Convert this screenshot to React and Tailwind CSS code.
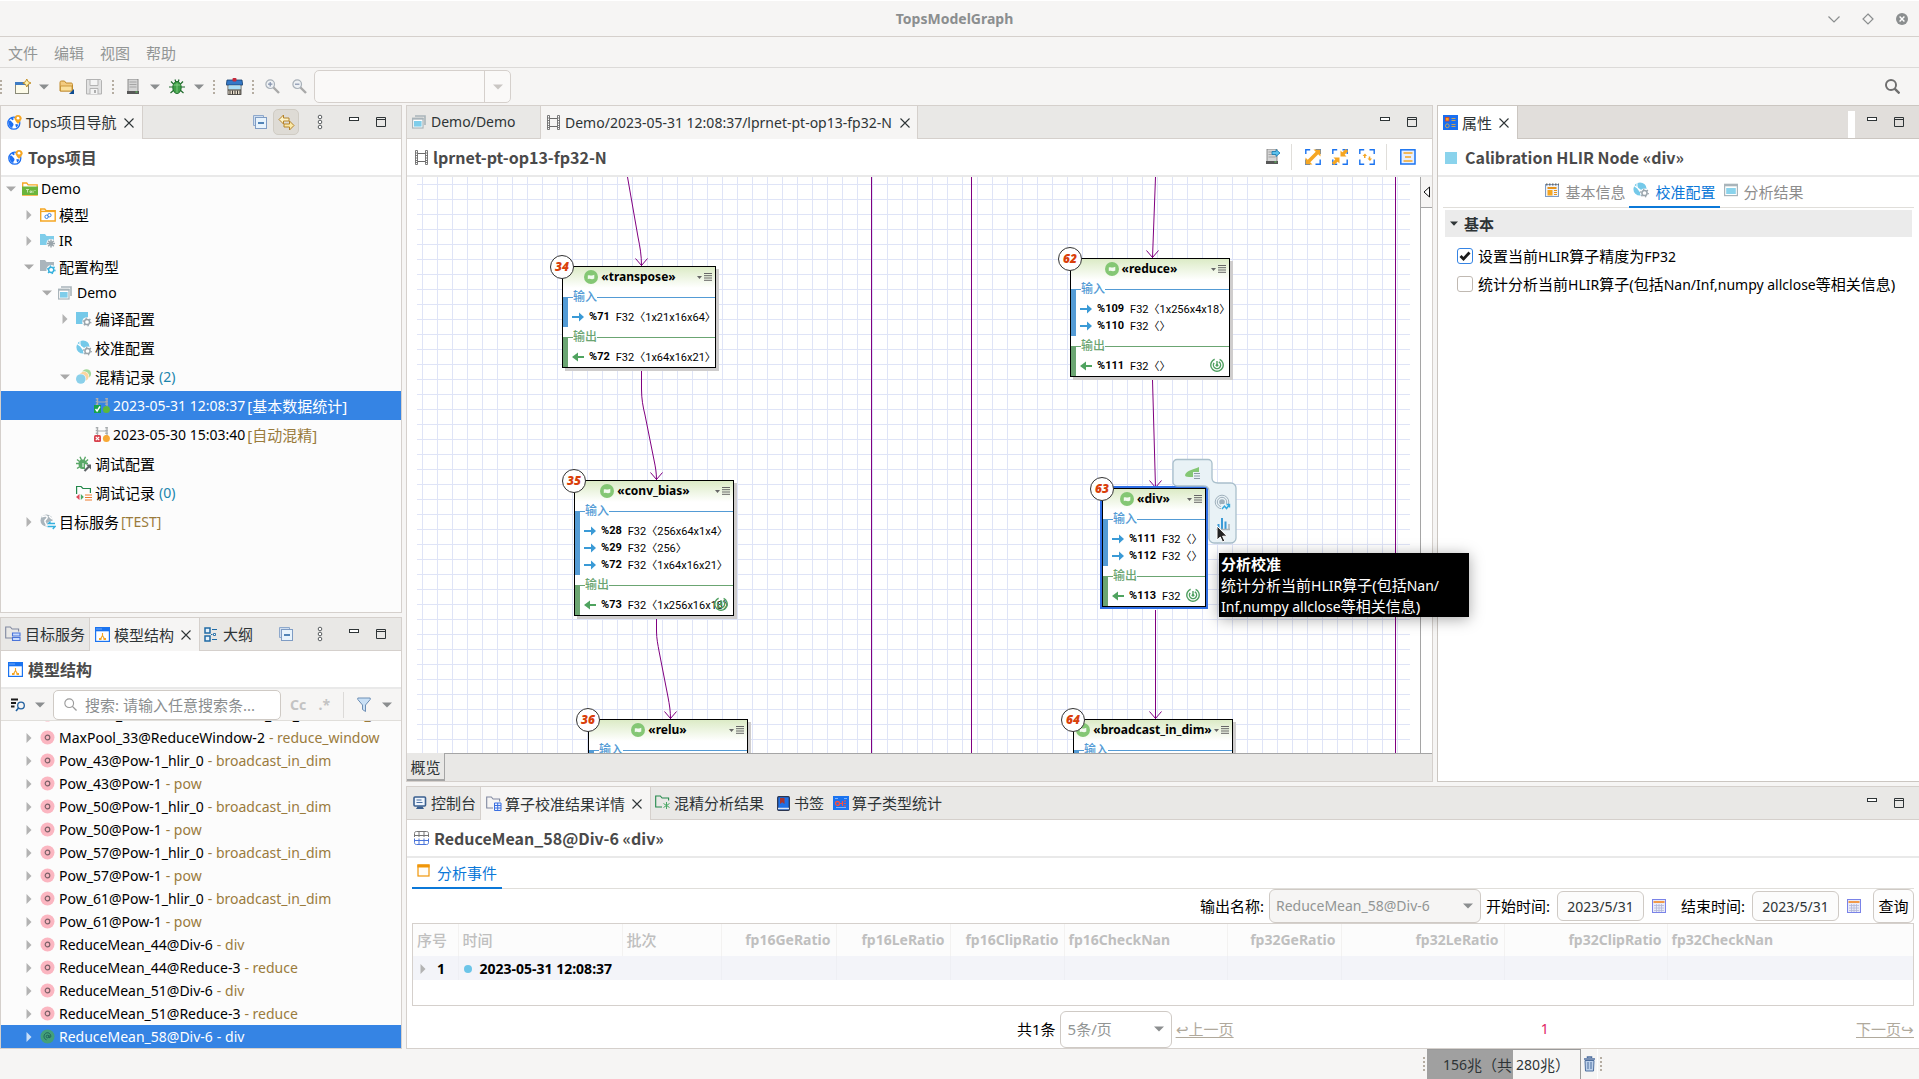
import React from "react";

/* ---------- icons ---------- */

const Svg = ({ s = 16, w, h, vb, children, className = "" }) => (
  <svg width={w || s} height={h || s} viewBox={vb || `0 0 ${w || s} ${h || s}`} className={`block shrink-0 ${className}`} fill="none" aria-hidden="true">
    {children}
  </svg>
);

const Caret = ({ c = "#8b8e8f" }) => (
  <Svg w={10} h={6}><path d="M0 0.5h10L5 5.5z" fill={c} /></Svg>
);
const Grip = () => (
  <Svg w={3} h={16}>
    {[1, 5, 9, 13].map((y) => <rect key={y} x="0" y={y} width="2" height="2" fill="#b5ada2" />)}
  </Svg>
);
const CloseX = () => (
  <Svg w={10} h={10}><path d="M.5.5l9 9M9.5.5l-9 9" stroke="#2e3436" strokeWidth="1.1" /></Svg>
);
const MinIcon = () => (
  <Svg w={10} h={4}><rect x=".5" y=".5" width="9" height="3" stroke="#2e3436" fill="#fff" /></Svg>
);
const MaxIcon = () => (
  <Svg w={10} h={10}><path d="M.5.5h9v9h-9zM.5 2.5h9" stroke="#2e3436" /></Svg>
);
const Dots3 = () => (
  <Svg w={6} h={16}>
    {[3, 8, 13].map((y) => <circle key={y} cx="3" cy={y} r="1.8" stroke="#4a4e50" fill="#fff" strokeWidth=".9" />)}
  </Svg>
);
const CollapseAll = () => (
  <Svg w={14} h={14}>
    <path d="M.5.5h10v2h-8v8h-2z" fill="#cfdef0" stroke="#8fa9cc" />
    <rect x="2.500" y="2.500" width="11" height="11" fill="#e8f3fc" stroke="#7f9cc4" />
    <path d="M5 8h6" stroke="#12539a" strokeWidth="1.400" />
  </Svg>
);
const LinkEditor = () => (
  <Svg w={17} h={17}>
    <path d="M1 5.500L5.500 1v3H11v3H5.500v3z" fill="#fdf3c8" stroke="#b5832a" />
    <path d="M16 11.500L11.500 7v3H6v3h5.500v3z" fill="#fbe9a6" stroke="#b5832a" />
  </Svg>
);
const GlobePin = () => (
  <Svg s={15}>
    <circle cx="6.800" cy="8.200" r="6" stroke="#1d6ff2" strokeWidth="1.300" fill="#fff" />
    <path d="M1.500 6C3 5 4 5.500 4.500 6.500s2 1.500 2 3-1.200 1.500-1.200 3.500C3 12.500 1 9.500 1.500 6zM4 3c1.500-.5 3 0 2.500 1.500S4 5 4 3zM8.500 9l3 .5-1.700 3c-1-.5-1.500-2-1.300-3.500z" fill="#1d6ff2" />
    <path d="M11 0c2.200 0 3.600 1.500 3.600 3.300C14.600 5.500 11 9 11 9S7.500 5.500 7.500 3.300C7.500 1.500 8.800 0 11 0z" fill="#f5a623" />
    <circle cx="11" cy="3.200" r="1.400" fill="#fff" />
  </Svg>
);
const Windows = () => (
  <Svg s={14}>
    <path d="M3 1h10v9" stroke="#a9b4ba" strokeWidth="1.600" />
    <rect x=".6" y="3.600" width="10.400" height="9.400" fill="#fff" stroke="#a9b4ba" strokeWidth="1.200" />
    <path d="M0 3.600h11.500" stroke="#a9b4ba" strokeWidth="2" />
    <rect x="2" y="6" width="7.600" height="5.600" fill="#7fcdea" />
  </Svg>
);
const Film = ({ c = "#6b6b6b" }) => (
  <Svg w={13} h={15}>
    <path d="M.5.500h2v14h-2zM10.500.500h2v14h-2z" fill="#fff" stroke={c} strokeWidth=".9" />
    <path d="M.5 3h2M.5 5.500h2M.5 8h2M.5 10.500h2M.5 12.500h2M10.500 3h2M10.500 5.500h2M10.500 8h2M10.500 10.500h2M10.500 12.500h2" stroke={c} strokeWidth=".9" />
    <path d="M3 3.500h7M3 11.500h7" stroke={c} />
  </Svg>
);
const FolderTops = () => (
  <Svg w={16} h={14}>
    <path d="M.7 13V1h4l1.500 1.800h9V13z" fill="#fff" stroke="#f5a623" strokeWidth="1.300" />
    <rect x="0" y="4.500" width="16" height="8.500" fill="#6bb53c" />
    <path d="M4 7.500h3M5.500 7.500v3M8 9h1.500v1.500H8zM11 8.500v2.500M12.500 8.500h1" stroke="#d9efc9" strokeWidth=".8" />
  </Svg>
);
const FolderLink = () => (
  <Svg w={16} h={14}>
    <path d="M.7 13V1h4l1.500 1.800h9V13z" fill="#fff" stroke="#f5a623" strokeWidth="1.400" />
    <path d="M.7 3.400h14.500" stroke="#f5a623" strokeWidth="1.400" />
    <circle cx="6.600" cy="8.800" r="1.700" stroke="#3b7fe0" /><circle cx="9.400" cy="7.200" r="1.700" stroke="#3b7fe0" />
  </Svg>
);
const Gear = ({ x, y, c }) => (
  <g>
    <circle cx={x} cy={y} r="2.600" stroke={c} strokeWidth="1.500" fill="#fff" />
    <circle cx={x} cy={y} r="3.800" stroke={c} strokeWidth="1.300" strokeDasharray="1.400 2.580" />
  </g>
);
const FolderIR = () => (
  <Svg s={16}>
    <path d="M0 12V1h5l1.500 2H14v9z" fill="#7fcdea" />
    <circle cx="11" cy="10.500" r="4.500" fill="#fcfcfc" />
    <path d="M11 6.500v8M7 10.500h8M8.200 7.700l5.600 5.600M13.800 7.700l-5.600 5.600" stroke="#9aa5ac" strokeWidth="1.500" />
  </Svg>
);
const FolderGear = () => (
  <Svg s={16}>
    <path d="M0 12V1h5l1.500 2H14v9z" fill="#aab5bc" />
    <circle cx="11.200" cy="10.800" r="4.800" fill="#fcfcfc" />
    <Gear x={11.200} y={10.800} c="#35b1de" />
  </Svg>
);
const SquareGear = () => (
  <Svg s={16}>
    <path d="M0 1h12v12H0z" fill="#75c9e9" />
    <circle cx="11" cy="11" r="4.800" fill="#fcfcfc" /><Gear x={11} y={11} c="#9aa5ac" />
  </Svg>
);
const Calib = () => (
  <Svg s={16}>
    <circle cx="7" cy="7" r="6.600" fill="#75c9e9" />
    <path d="M1 3.500l11 8M4 .8c-1 4 2 9 6 11" stroke="#fff" strokeWidth="1.100" />
    <circle cx="11.500" cy="11" r="4.500" fill="#fff" /><Gear x={11.500} y={11} c="#9aa5ac" />
  </Svg>
);
const Mixed = () => (
  <Svg s={16}>
    <circle cx="10.500" cy="4.800" r="4.600" fill="#a5d99c" /><circle cx="8" cy="7.500" r="5.200" fill="#fff" />
    <circle cx="8" cy="7.500" r="4.700" fill="#fbd5a0" /><circle cx="5" cy="10" r="5.200" fill="#fff" />
    <circle cx="4.800" cy="10" r="4.800" fill="#8bd0ea" />
  </Svg>
);
const Record = ({ ok }) => (
  <Svg s={16}>
    <path d="M3.500 0v8M13 0v9M4 4h9" stroke="#a8acae" strokeWidth="1.200" />
    <path d="M3 0v8M12.500 0v9" stroke="#a8acae" strokeWidth="2.500" strokeDasharray="1.500 1.200" />
    {ok ? <rect x="0" y="7" width="7" height="8" fill="#17a34a" /> : <rect x="0" y="8" width="7" height="7" rx="1.500" fill="#d9434e" />}
    {ok ? <path d="M1.500 11l1.600 2L6 8.500" stroke="#fff" strokeWidth="1.400" /> : <path d="M1.800 9.800l3.400 3.400M5.200 9.800l-3.400 3.400" stroke="#fff" strokeWidth="1.200" />}
    <circle cx="12.400" cy="11.600" r="3.500" fill={ok ? "#5cb83a" : "#f7a935"} />
  </Svg>
);
const BugCfg = () => (
  <Svg s={16}>
    <path d="M2.500 8c0-3 1.500-4.500 4-4.500s4.500 1.500 4.500 4.500H9v5H6.500c-2.500 0-4-2-4-5z" fill="#5aa767" />
    <path d="M0 7.500h12M1 3.500l2.500 2M12 3.500l-2 2M1 12.500l2.500-1.700M4 .8L5.500 4M9.500.8L8 4" stroke="#5aa767" strokeWidth="1.400" />
    <path d="M7 7v4" stroke="#fcfcfc" />
    <path d="M8.500 15l5-5" stroke="#5e6366" strokeWidth="2.200" /><path d="M10 8.500h5v5z" fill="#5e6366" />
  </Svg>
);
const DbgRec = () => (
  <Svg s={16}>
    <path d="M.6 9V1.500h4.500l1.800 2h7.500V8" stroke="#23884a" strokeWidth="1.200" />
    <path d="M3.500 9v6L0 12z" fill="#e14a5b" /><path d="M4.800 9v6l3-3z" fill="#4aa864" />
    <path d="M9 10h7M9 12.500h7M9 15h7" stroke="#ec7a2c" strokeWidth="1.200" />
  </Svg>
);
const GlobeSync = () => (
  <Svg s={16}>
    <circle cx="6.500" cy="6.500" r="6" fill="#aab5bc" />
    <path d="M2 3c3-2 6-1 5 1s-3 2-2 4 2 2 1 4M9 2l3 3" stroke="#fff" strokeWidth="1.500" />
    <circle cx="11.500" cy="11.500" r="4.500" fill="#fcfcfc" />
    <path d="M15 9.500H8.500l2-2M7.500 12.500h7.500l-2.200 2.500" stroke="#35b1de" strokeWidth="1.400" />
  </Svg>
);
const FolderServer = () => (
  <Svg s={16}>
    <path d="M7 12H.7V1h4.600l1.800 2h6.500v2.500" stroke="#8088a0" strokeWidth="1.100" />
    <path d="M7.500 7h7.500v3H7.500zM7.500 11.500h7.500v3H7.500z" fill="#c9dcff" stroke="#4a74d9" strokeWidth="1.100" />
  </Svg>
);
const ModelIcon = () => (
  <Svg s={15}>
    <rect x=".6" y=".6" width="13.800" height="13.800" fill="#fff" stroke="#1a73f0" strokeWidth="1.200" />
    <rect x="0" y="0" width="15" height="4.300" fill="#1a73f0" />
    <path d="M1.500 2h1M3.500 2h1M5.500 2h1" stroke="#cfe0ff" />
    <path d="M7.500 6v2.500L5.500 12M7.500 8.500l2 3.500" stroke="#f5a623" strokeWidth="1.100" />
    <path d="M4 11h2.500v2H4zM8.500 11H11v2H8.500z" fill="#f5a623" />
  </Svg>
);
const Outline = () => (
  <Svg s={15}>
    <path d="M1 1h5v5H1zM1 9h5v5H1z" stroke="#1f6aa5" strokeWidth="1.500" fill="#e4f1fb" />
    <path d="M8 2.500h5M8 12.500h5M7 7.500h1.500" stroke="#1f6aa5" /><path d="M9.500 6.500h2v2h-2z" stroke="#1f6aa5" fill="#fff" strokeWidth=".9" />
  </Svg>
);
const SearchG = ({ c = "#9a9a9a", s = 14, sw = 1.2 }) => (
  <Svg s={s} vb="0 0 14 14"><circle cx="5.600" cy="5.600" r="4.700" stroke={c} strokeWidth={sw} /><path d="M9 9l4.500 4.500" stroke={c} strokeWidth={sw * 1.200} /></Svg>
);
const NodeDot = ({ sel }) => (
  <Svg s={15}>
    <circle cx="7.500" cy="7.500" r="7" fill={sel ? "#43a079" : "#fbb6c1"} />
    {sel ? (
      <g stroke="#1d5c58" strokeWidth=".9"><circle cx="7.500" cy="7.500" r="1.300" /><path d="M9 6v2.500c1.500.8 2.200-1 1.600-2.400C9.800 3.500 6.500 3 4.900 5s-1 5 1.600 5.800" /></g>
    ) : (
      <circle cx="7.500" cy="7.500" r="2.300" stroke="#7b6067" strokeWidth="1.200" />
    )}
  </Svg>
);
const Funnel = () => (
  <Svg w={14} h={16}>
    <path d="M.8 1h12.400v1.500L8.500 8v6.500L5.500 12.500V8L.8 2.500z" fill="#c9e0f6" stroke="#6e8fb5" />
  </Svg>
);
const Server = ({ arrow }) => (
  <Svg s={16}>
    <rect x="2" y="0" width="10" height="13" fill="#d5d5d5" stroke="#777" strokeWidth=".8" />
    <path d="M3.500 3h7M3.500 5.500h7M3.500 8h7" stroke="#a5a5a5" />
    <path d="M1 12h12v3H1z" fill="#585858" /><path d="M9.500 13h2" stroke="#58d058" />
    {arrow && <path d="M7 2.500h4V.5l4 3.500-4 3.500v-2H7z" fill="#5cc3ee" stroke="#1577ad" strokeWidth=".8" />}
  </Svg>
);
const Bug = () => (
  <Svg s={16}>
    <path d="M0 8h16M2 2.500l4 4M14 2.500l-4 4M1.500 14l4-3.500M14.500 14l-4-3.500M6 .5l1 3M10 .5l-1 3" stroke="#1f6b2c" strokeWidth="1.200" />
    <ellipse cx="8" cy="8.500" rx="4.200" ry="6" fill="#3f9f47" stroke="#1c6a29" /><path d="M8 4v10M4.500 6h7" stroke="#8bd48a" strokeWidth=".8" />
  </Svg>
);
const Shop = () => (
  <Svg s={17}>
    <rect x="2" y="6" width="13" height="10.500" fill="#e8ddcb" stroke="#3b3835" strokeWidth=".8" />
    <path d="M1 2h15l.7 5H.3z" fill="#3478c7" stroke="#17406f" strokeWidth=".8" /><rect x="6.500" y="0" width="4" height="3.500" rx="1" fill="#c5283a" />
    <path d="M2.500 7.500h12v4h-12z" fill="#a9dcf5" /><path d="M4 12.500v4M6.500 12.500v4M9 12.500v4M11.500 12.500v4M14 12.500v4M2 12h13" stroke="#3b3835" />
  </Svg>
);
const NewWiz = () => (
  <Svg s={16}>
    <rect x=".5" y="3.500" width="13" height="11" fill="#fdfbe9" stroke="#8a8a78" /><rect x="0" y="3" width="12" height="3" fill="#3f7cc4" />
    <path d="M11.800 0l1.300 2.700L16 4l-2.900 1.300L11.800 8l-1.300-2.700L7.800 4l2.700-1.300z" fill="#fff4b0" stroke="#c08a1f" strokeWidth=".9" />
  </Svg>
);
const OpenFolder = () => (
  <Svg s={16}>
    <path d="M1 12V3.500C1 2.500 1.500 2 2.500 2h3l1.500 2h5c1 0 1.500.5 1.500 1.500V12z" fill="#f3cb80" stroke="#c08a2c" />
    <path d="M1.500 12V7h11.500v5z" fill="#fbdf9a" stroke="#c08a2c" strokeWidth=".8" /><path d="M15 10v5h-5z" fill="#0e4c92" />
  </Svg>
);
const Save = () => (
  <Svg s={16}>
    <path d="M.5.5h14l1 1v13.500H.5z" fill="#e2e2e2" stroke="#b3b3b3" /><path d="M4 .5h8v6H4zM4 15V9.500h8V15" fill="#f4f4f4" stroke="#b3b3b3" /><path d="M9 11v3" stroke="#999" strokeWidth="1.500" />
  </Svg>
);
const Mag = ({ plus }) => (
  <Svg s={15}>
    <path d="M8 8l6 6" stroke="#a9a9a9" strokeWidth="2.400" /><circle cx="5.200" cy="5.200" r="4.300" fill="#eef1f4" stroke="#a8b0b8" strokeWidth="1.200" />
    <path d={plus ? "M3 5.200h4.400M5.200 3v4.400" : "M3 5.200h4.400"} stroke="#8593ad" strokeWidth="1.200" />
  </Svg>
);
const Corner = ({ children }) => (
  <Svg s={16}><path d="M.8 5V.8h4.400M10.500.8h4.700V5M15.200 10.500v4.700h-4.700M5.200 15.200H.8v-4.700" stroke="#1a73f0" strokeWidth="1.400" />{children}</Svg>
);
const Expand = () => <Corner><path d="M2.500 13.500l11-11" stroke="#f5a623" strokeWidth="3.600" /><path d="M8.500.5h7v7zM.5 8.500v7h7z" fill="#f5a623" /></Corner>;
const Shrink = () => <Corner><path d="M1 15l4-4M15 1l-4 4" stroke="#f5a623" strokeWidth="3.200" /><path d="M1.500 8.500H7.500v6zM8.500 1.500v6h6z" fill="#f5a623" /></Corner>;
const Fit = () => <Corner><path d="M3.500 7L6 4.500 8 7H6.500v2H5V7zM8.500 9.500h1.300v-2h1.500v2H13L11 12z" fill="#f5a623" /></Corner>;
const ListIcon = () => (
  <Svg s={16}><rect x=".8" y=".8" width="14.200" height="14.200" fill="#e8f0fe" stroke="#1a73f0" strokeWidth="1.500" /><path d="M3.500 4h9M5 8h6M3.500 12h9" stroke="#f5a623" strokeWidth="1.400" /></Svg>
);
const Props = () => (
  <Svg s={15}>
    <rect width="15" height="15" fill="#1a6ff0" /><rect x="2.500" y="2.500" width="3.500" height="3.500" fill="#f5a623" stroke="#d9402b" strokeWidth=".8" />
    <path d="M8.500 3.500h4M8.500 5.500h4M8.500 9.500h4M8.500 11.500h4" stroke="#c9a25a" /><circle cx="4.300" cy="10.800" r="1.900" stroke="#c9a25a" />
  </Svg>
);
const BasicInfo = () => (
  <Svg s={14}>
    <rect x=".5" y="1.500" width="13" height="12" fill="#eef2f8" stroke="#7e9cc4" /><path d="M1 1.500h13" stroke="#6c6c6c" strokeDasharray="1.500 1.500" strokeWidth="2" />
    <path d="M2.500 5h9" stroke="#e8931a" strokeWidth="2" /><rect x="2.500" y="7" width="5" height="5.500" fill="#f5a623" /><path d="M9 7.500h3M9 9.500h3M9 11.500h3" stroke="#e8931a" />
  </Svg>
);
const ResultWin = () => (
  <Svg s={14}><rect x=".6" y="1.600" width="12.800" height="11" fill="#fff" stroke="#a9b4ba" strokeWidth="1.200" /><path d="M0 2h14" stroke="#a9b4ba" strokeWidth="2.600" /><rect x="2.200" y="5" width="9.600" height="6" fill="#8ad3ec" /></Svg>
);
const ConsoleIcon = () => (
  <Svg s={14}><rect x="1" y="1" width="11.500" height="9" rx="1" fill="#eef5fd" stroke="#3a5f8f" strokeWidth="1.600" /><path d="M3.500 4h5M3.500 6.500h6" stroke="#4a6fa0" /><path d="M3 13h8L9.500 10.500h-5z" fill="#3a5f8f" /></Svg>
);
const FolderTable = () => (
  <Svg s={16}>
    <path d="M7 12H.7V1h4.600l1.800 2h6.500v2.500" stroke="#8088a0" strokeWidth="1.100" />
    <path d="M8.500 7h6.500v7.500H8.500zM8.500 9.500H15M11.700 7v7.500M8.500 12H15" fill="#eef4ff" stroke="#3b6fe0" />
  </Svg>
);
const FolderStar = () => (
  <Svg s={16}>
    <path d="M7 12H.7V1h4.600l1.800 2h6.500v2.500" stroke="#23884a" strokeWidth="1.100" />
    <path d="M11.500 7v7M8.500 8.500l6 4M14.500 8.500l-6 4" stroke="#4aa864" />
  </Svg>
);
const Book = () => (
  <Svg w={13} h={15}><rect x=".7" y=".7" width="11.600" height="13.600" rx="1" fill="#1f6fe5" stroke="#2b3550" strokeWidth="1.300" /><path d="M1 12.500h11" stroke="#dfe6f2" strokeWidth="1.500" /><path d="M3 2h4.500v6L5.200 6.200 3 8z" fill="#a8352f" /></Svg>
);
const OpStat = () => (
  <Svg w={16} h={14}><rect width="16" height="14" fill="#1a73f0" /><path d="M2 2.500h3M11 2.500h3M3 11.500h10" stroke="#7db2ff" /><circle cx="4.500" cy="7.500" r="2" stroke="#ff4d3d" strokeWidth="1.300" /><path d="M6.500 7.500h3M9.500 5v5M11 5h2M11 10h2M11 7.500h2" stroke="#ff4d3d" strokeWidth="1.200" /></Svg>
);
const TableIcon = () => (
  <Svg w={15} h={14}>
    <path d="M.500 6V2.500C.500 1.200 1.200.500 2.500.500h10c1.300 0 2 .700 2 2V6M.500 4.500h14M5 .500V6M10 .500V6" stroke="#777" />
    <path d="M.500 7.500v4c0 1.300.700 2 2 2h10c1.300 0 2-.700 2-2v-4M5 7.500v6M10 7.500v6M.500 9.500h14" stroke="#4a74d9" />
  </Svg>
);
const Calendar = () => (
  <Svg s={14}><rect x=".5" y=".5" width="13" height="13" fill="#e9ebf9" stroke="#7a83e8" /><path d="M1.500 3h11" stroke="#f29a4a" strokeWidth="2" /><path d="M2 6.500h10M2 9h10M2 11.500h10M4.500 5v8M7 5v8M9.500 5v8" stroke="#b3b8d8" strokeWidth=".8" /></Svg>
);
const Trash = () => (
  <Svg w={13} h={16}><path d="M1 3h11M4.500 2V1h4v1" stroke="#4d6e9e" strokeWidth="1.500" /><path d="M2 4.500h9l-.5 10.500h-8z" fill="#bcd0ea" stroke="#4d6e9e" /><path d="M5 6v7M8 6v7" stroke="#4d6e9e" /></Svg>
);
const Leaf = () => (
  <Svg s={14}><circle cx="7" cy="7" r="7" fill="#84c774" /><path d="M3.800 9.300V5.600C5.500 4.300 7.300 6.300 10.300 4.800v3.700C7.500 10.200 6.300 7.900 3.800 9.300z" fill="#f2faef" /></Svg>
);
const Spiral = () => (
  <Svg s={14}><circle cx="7" cy="7" r="6.200" stroke="#4f9f60" strokeWidth="1.400" strokeDasharray="33 6" transform="rotate(-65 7 7)" /><circle cx="7" cy="7" r="3.600" stroke="#4f9f60" strokeWidth="1.400" strokeDasharray="17 5" transform="rotate(-60 7 7)" /><path d="M7 3v4.500" stroke="#4f9f60" strokeWidth="1.400" /><circle cx="7" cy="7.300" r="1.400" fill="#4f9f60" /></Svg>
);

/* ---------- shared pieces ---------- */

const HEAD_FONT = "font-['Noto_Sans_CJK_SC',sans-serif] text-base font-bold text-[#4a4a4a]";

const IconButton = ({ label, children, className = "" }) => (
  <button type="button" aria-label={label} className={`flex shrink-0 items-center justify-center ${className}`}>{children}</button>
);
const MinMax = () => (
  <div className="flex items-start gap-[17px] self-start pt-[11px] pr-[15px]">
    <IconButton label="最小化"><MinIcon /></IconButton>
    <IconButton label="最大化"><MaxIcon /></IconButton>
  </div>
);
const PanelHead = ({ icon, title, children, className = "px-[7px]" }) => (
  <header className={`flex h-[38px] shrink-0 items-center gap-[5px] border-b-2 border-[#e9e9e9] bg-white ${className}`}>
    {icon}
    <h2 className={`${HEAD_FONT} leading-5 whitespace-nowrap`}>{title}</h2>
    {children}
  </header>
);

/* ---------- project tree ---------- */

const PROJECT = [
  { d: 0, open: true, icon: <FolderTops />, t: "Demo", latin: true },
  { d: 1, open: false, icon: <FolderLink />, t: "模型" },
  { d: 1, open: false, icon: <FolderIR />, t: "IR", latin: true },
  { d: 1, open: true, icon: <FolderGear />, t: "配置构型" },
  { d: 2, open: true, icon: <Windows />, t: "Demo", latin: true },
  { d: 3, open: false, icon: <SquareGear />, t: "编译配置" },
  { d: 3, icon: <Calib />, t: "校准配置" },
  { d: 3, open: true, icon: <Mixed />, t: "混精记录", count: "(2)" },
  { d: 4, icon: <Record ok />, t: <span className="text-sm">2023-05-31 12:08:37</span>, extra: "[基本数据统计]", sel: true },
  { d: 4, icon: <Record />, t: <span className="text-sm">2023-05-30 15:03:40</span>, extra: "[自动混精]" },
  { d: 3, icon: <BugCfg />, t: "调试配置" },
  { d: 3, icon: <DbgRec />, t: "调试记录", count: "(0)" },
  { d: 1, open: false, icon: <GlobeSync />, t: "目标服务", extra: <span className="text-sm">[TEST]</span> },
];

const Twisty = ({ open, sel }) => (
  <span className="flex w-[10px] shrink-0 justify-center">
    {open === true && <Svg w={10} h={6}><path d="M0 .5h10L5 5.500z" fill="#a9a9a9" /></Svg>}
    {open === false && <Svg w={6} h={10}><path d="M.5 0v10L5.500 5z" fill={sel ? "#c9def7" : "#b3b3b3"} /></Svg>}
  </span>
);
const INDENT = ["pl-[5px]", "pl-[23px]", "pl-[41px]", "pl-[59px]", "pl-[77px]"];

const TreeRow = ({ d, open, icon, t, latin, count, extra, sel }) => (
  <li role="treeitem" aria-selected={!!sel} className={`flex shrink-0 items-center whitespace-nowrap ${INDENT[d]} ${latin ? "h-[23px] text-sm" : "h-[29px]"} ${sel ? "bg-[#3584e4] text-white" : "text-black"}`}>
    <Twisty open={open} sel={sel} />
    <span className="ml-[6px] flex w-[19px] shrink-0">{icon}</span>
    <span>{t}</span>
    {count && <span className="ml-1 text-sm text-[#1a85ad]">{count}</span>}
    {extra && <span className={`ml-[2px] ${sel ? "" : "text-[#9a7b3c]"}`}>{extra}</span>}
  </li>
);

const ProjectPanel = () => (
  <section aria-label="Tops项目导航" className="flex h-[508px] shrink-0 flex-col border border-[#d5d0cc] bg-[#fcfcfc]">
    <div className="flex h-[33px] shrink-0 items-center border-b border-[#d5d0cc] bg-[#e9e8e6]">
      <div className="-mb-px flex h-[33px] w-[142px] items-center border-r border-[#d5d0cc] bg-[#f6f5f4] pl-[6px] text-[#2e3436]">
        <GlobePin />
        <button type="button" className="ml-1 whitespace-nowrap"><span className="text-sm">Tops</span>项目导航</button>
        <IconButton label="关闭" className="ml-[7px]"><CloseX /></IconButton>
      </div>
      <div className="ml-auto flex items-center">
        <IconButton label="全部折叠"><CollapseAll /></IconButton>
        <IconButton label="链接编辑器" className="ml-[6px] h-[26px] w-[26px] rounded-[5px] border border-[#d0ccc4] bg-[#dedbd5]"><LinkEditor /></IconButton>
        <IconButton label="更多" className="mx-[18px]"><Dots3 /></IconButton>
      </div>
      <div className="w-2" />
      <MinMax />
    </div>
    <PanelHead icon={<GlobePin />} title="Tops项目" />
    <ul role="tree" className="flex flex-col">
      {PROJECT.map((r, i) => <TreeRow key={i} {...r} />)}
    </ul>
  </section>
);

/* ---------- model structure ---------- */

const OPS = [
  ["MaxPool_33@ReduceWindow-2_hlir_0", "reduce_window"],
  ["MaxPool_33@ReduceWindow-2", "reduce_window"],
  ["Pow_43@Pow-1_hlir_0", "broadcast_in_dim"],
  ["Pow_43@Pow-1", "pow"],
  ["Pow_50@Pow-1_hlir_0", "broadcast_in_dim"],
  ["Pow_50@Pow-1", "pow"],
  ["Pow_57@Pow-1_hlir_0", "broadcast_in_dim"],
  ["Pow_57@Pow-1", "pow"],
  ["Pow_61@Pow-1_hlir_0", "broadcast_in_dim"],
  ["Pow_61@Pow-1", "pow"],
  ["ReduceMean_44@Div-6", "div"],
  ["ReduceMean_44@Reduce-3", "reduce"],
  ["ReduceMean_51@Div-6", "div"],
  ["ReduceMean_51@Reduce-3", "reduce"],
  ["ReduceMean_58@Div-6", "div"],
];

const ModelPanel = () => (
  <section aria-label="模型结构" className="mt-1 flex min-h-0 flex-1 flex-col border border-[#d5d0cc] bg-[#fcfcfc]">
    <div className="flex h-[33px] shrink-0 items-center border-b border-[#d5d0cc] bg-[#e9e8e6] text-[#2e3436]">
      <button type="button" className="flex w-[88px] items-center gap-1 pl-[4px] whitespace-nowrap"><FolderServer />目标服务</button>
      <div className="-mb-px flex h-[33px] w-[111px] items-center border-x border-[#d5d0cc] bg-[#f6f5f4] pl-[5px]">
        <ModelIcon />
        <button type="button" className="ml-1 whitespace-nowrap">模型结构</button>
        <IconButton label="关闭" className="ml-[7px]"><CloseX /></IconButton>
      </div>
      <button type="button" className="flex items-center gap-1 pl-[4px] whitespace-nowrap"><Outline />大纲</button>
      <div className="ml-auto flex items-center">
        <IconButton label="全部折叠"><CollapseAll /></IconButton>
        <IconButton label="更多" className="mr-[18px] ml-[24px]"><Dots3 /></IconButton>
      </div>
      <div className="w-2" />
      <MinMax />
    </div>
    <PanelHead icon={<ModelIcon />} title="模型结构" />
    <div className="flex h-8 shrink-0 items-center border-b border-[#e0deda] bg-[#f6f5f4]">
      <IconButton label="搜索方式" className="ml-[9px]">
        <Svg w={16} h={14}><path d="M1 1.500h7M1 5h5M1 8.500h3.500" stroke="#1c1c1c" strokeWidth="1.800" /><circle cx="11" cy="7.500" r="3.300" stroke="#1f5f9e" strokeWidth="1.300" /><path d="M8.500 10L6 13" stroke="#1f5f9e" strokeWidth="1.600" /></Svg>
      </IconButton>
      <IconButton label="搜索选项" className="ml-[9px]"><Caret /></IconButton>
      <label className="ml-[8px] flex h-[30px] w-[228px] items-center gap-2 rounded-[5px] border border-[#cfcac5] bg-white pr-[6px] pl-[10px]">
        <SearchG s={13} />
        <input aria-label="搜索" placeholder="搜索: 请输入任意搜索条..." className="min-w-0 flex-1 bg-transparent outline-none placeholder:text-[#8b8e8f]" />
      </label>
      <button type="button" className="ml-[9px] text-sm font-bold text-[#c3c3c3]">Cc</button>
      <button type="button" className="ml-[11px] w-[14px] text-sm font-bold text-[#c3c3c3]">.*</button>
      <span className="ml-3 h-[26px] w-px bg-[#dcdad8]" />
      <IconButton label="筛选" className="ml-[13px]"><Funnel /></IconButton>
      <IconButton label="筛选选项" className="ml-[11px]"><Caret /></IconButton>
    </div>
    <ul role="tree" className="flex min-h-0 flex-1 flex-col justify-end overflow-hidden text-sm">
      {OPS.map(([name, kind], i) => {
        const sel = i === OPS.length - 1;
        return (
          <li key={i} role="treeitem" aria-selected={sel} className={`flex h-[23px] shrink-0 items-center pl-[23px] whitespace-nowrap ${sel ? "bg-[#3584e4] text-white" : "text-black"}`}>
            <Twisty open={false} sel={sel} />
            <span className="ml-[6px] flex w-[19px] shrink-0"><NodeDot sel={sel} /></span>
            <span>{name}</span>
            <span className={`ml-1 ${sel ? "" : "text-[#9a7b3c]"}`}>- {kind}</span>
          </li>
        );
      })}
    </ul>
  </section>
);

/* ---------- graph ---------- */

const Arrow = ({ out }) => (
  <Svg w={12} h={10}>
    {out ? <path d="M12 5H5" stroke="#4fa35f" strokeWidth="2" /> : <path d="M0 5h8" stroke="#3a9ad6" strokeWidth="2" />}
    {out ? <path d="M6 .5v9L0 5z" fill="#4fa35f" /> : <path d="M7 .5v9L12 5z" fill="#3a9ad6" />}
  </Svg>
);

const Port = ({ id, type, out }) => (
  <li className="flex h-[17px] items-center pl-[4px] whitespace-nowrap">
    <Arrow out={out} />
    <b className="ml-[5px]">{id}</b>
    <span className="ml-[6px] pt-[2px]">{type}</span>
  </li>
);

const Ports = ({ label, out, items }) => (
  <div className={`relative border-t border-l-[5px] pt-[10px] pb-[2px] ${out ? "border-[#6ba572]" : "border-[#549bd5]"}`}>
    <span className={`absolute -top-[10px] left-[5px] bg-white text-xs leading-[18px] font-medium ${out ? "text-[#6ba572]" : "text-[#549bd5]"}`}>{label}</span>
    <ul>{items.map((p) => <Port key={p[0]} id={p[0]} type={p[1]} out={out} />)}</ul>
  </div>
);

const NODES = [
  { n: 34, pos: "left-[155px] top-[89px] w-[154px]", t: "transpose", i: [["%71", "F32〈1x21x16x64〉"]], o: [["%72", "F32〈1x64x16x21〉"]] },
  { n: 35, pos: "left-[167px] top-[303px] w-[160px]", t: "conv_bias", i: [["%28", "F32〈256x64x1x4〉"], ["%29", "F32〈256〉"], ["%72", "F32〈1x64x16x21〉"]], o: [["%73", "F32〈1x256x16x18〉"]], spiral: true },
  { n: 36, pos: "left-[181px] top-[542px] w-[160px]", t: "relu", i: [["%73", "F32〈1x256x16x18〉"]], o: [["%74", "F32〈1x256x16x18〉"]] },
  { n: 62, pos: "left-[663px] top-[81px] w-[160px]", t: "reduce", i: [["%109", "F32〈1x256x4x18〉"], ["%110", "F32〈〉"]], o: [["%111", "F32〈〉"]], spiral: true },
  { n: 63, pos: "left-[695px] top-[311px] w-[104px]", t: "div", i: [["%111", "F32〈〉"], ["%112", "F32〈〉"]], o: [["%113", "F32〈〉"]], spiral: true, clip: true, sel: true },
  { n: 64, pos: "left-[666px] top-[542px] w-[160px]", t: "broadcast_in_dim", i: [["%113", "F32〈〉"]], o: [["%114", "F32〈1x256x4x18〉"]] },
];

const GraphNode = ({ n, pos, t, i, o, spiral, clip, sel }) => (
  <article className={`absolute ${pos} border border-black bg-white font-['Roboto','Noto_Sans_CJK_SC',sans-serif] text-[11px] leading-[14px] text-black ${sel ? "outline-2 outline-[#2f6fe6]" : "shadow-[3px_3px_0_#cfcdcd]"}`}>
    <header className="flex h-[30px] items-start bg-linear-to-b from-[#dcebc6] to-white to-70% pt-[3px] pr-[3px]">
      <h3 className="flex min-w-0 flex-1 items-center justify-center gap-[3px] font-['Noto_Sans',sans-serif] text-xs leading-[14px] font-bold">
        <Leaf /><span>«{t}»</span>
      </h3>
      <IconButton label="折叠" className="mt-[3px] gap-[2px]">
        <Svg w={5} h={3}><path d="M0 0h5L2.500 3z" fill="#666" /></Svg>
        <Svg w={8} h={8}><path d="M0 .5h8M0 2.700h8M0 5h8M0 7.300h8" stroke="#666" strokeWidth="1" /></Svg>
      </IconButton>
    </header>
    <Ports label="输入" items={i} />
    <div className="h-[10px]" />
    <Ports label="输出" items={o} out />
    {spiral && <span className={`absolute right-[5px] bottom-[4px] ${clip ? "bg-white" : ""}`}><Spiral /></span>}
    <span className="absolute -top-[12px] -left-[13px] flex h-6 w-6 items-center justify-center rounded-full border border-[#333] bg-white font-['Noto_Sans',sans-serif] text-xs font-black text-[#d9400b] italic">{n}</span>
  </article>
);

const Graph = () => (
  <div className="relative min-w-0 flex-1 overflow-hidden bg-white">
    <div className="absolute inset-y-0 right-[10px] left-[10px] bg-[linear-gradient(to_right,#dfe4f7_1px,transparent_1px),linear-gradient(to_bottom,#dfe4f7_1px,transparent_1px)] bg-[size:15px_15px] bg-[position:5px_7px]" />
    <svg width="1012" height="576" className="absolute top-0 left-0" fill="none" stroke="#800080" aria-hidden="true">
      <path d="M464.500 0v576M564.500 0v576M988.500 0v576" />
      <path d="M220.500 0L231 60C233 70 234.500 78 234.500 89M228.500 81.500l6 7 6-7" />
      <path d="M234.500 194v18C234.500 222 236 230 238 238L247 283C248.500 290 249.500 296 249.500 303M243.500 295.500l6 7 6-7" />
      <path d="M249.500 442v12C249.500 462 251 468 252 474L261 520C262.500 528 263.500 534 263.500 542M257.500 534.500l6 7 6-7" />
      <path d="M748.500 0L745.500 81M739.500 73.500l6 7 6-7" />
      <path d="M745.500 203L748.500 311M742.500 303.500l6 7 6-7" />
      <path d="M748.500 433V542M742.500 534.500l6 7 6-7" />
    </svg>
    {NODES.map((nd) => <GraphNode key={nd.n} {...nd} />)}
    <svg width="66" height="88" className="absolute top-[281px] left-[765px]" fill="none" aria-hidden="true">
      <path d="M5 1.500h31a4 4 0 0 1 4 4V20q0 5 6 5h13a5 5 0 0 1 5 5v50a5 5 0 0 1-5 5H42a5 5 0 0 1-5-5V33q0-5-6-5H5a4 4 0 0 1-4-4V5.500a4 4 0 0 1 4-4z" fill="#e9f2f6" stroke="#a9bfcb" strokeWidth="1.300" />
      <path d="M13 17c2-5 8-5 14-8v10H17c-3 0-4-1-4-2z" fill="#84c774" />
      <path d="M21 14h8v9h-8z" fill="#e9f2f6" /><path d="M22 15.500h6M22 18h6M22 20.500h6" stroke="#8b9aa5" />
      <circle cx="50" cy="44" r="6.800" stroke="#9fb0bc" /><circle cx="50" cy="44" r="4.700" stroke="#9fb0bc" /><circle cx="50" cy="44" r="2.800" fill="#9fb0bc" />
      <path d="M49 46h9v6h-9z" fill="#e9f2f6" /><path d="M50 51l2.500-3 2 2.500 3-4M54.500 46.500h3v3" stroke="#35a9de" strokeWidth="1.400" />
      <path d="M46.500 66v5M50 60v11M53.500 63.500v7.500" stroke="#3a9ad6" strokeWidth="2" /><path d="M57 66v5M44 71.500h14" stroke="#a9b4ba" strokeWidth="1.500" />
    </svg>
  </div>
);

const Tooltip = () => (
  <>
    <div role="tooltip" className="absolute top-[447px] left-[812px] z-20 h-[64px] w-[250px] bg-black px-[2px] pt-px leading-[21px] whitespace-nowrap text-white shadow-[0_2px_14px_rgba(0,0,0,0.35)]">
      <b className="block">分析校准</b>
      <p>统计分析当前<span className="text-sm">HLIR</span>算子(包括<span className="text-sm">Nan/</span></p>
      <p><span className="text-sm">Inf,numpy allclose</span>等相关信息)</p>
    </div>
    <svg width="12" height="19" viewBox="0 0 12 19" className="absolute top-[419px] left-[809px] z-20" aria-hidden="true">
      <path d="M1 1v14l3.300-3 2.200 5 2.300-1-2.200-4.800H11z" fill="#222" stroke="#fff" />
    </svg>
  </>
);

const Editor = () => (
  <section aria-label="编辑器" className="relative flex min-w-0 flex-1 flex-col border border-[#d5d0cc] bg-white">
    <div className="flex h-[33px] shrink-0 items-center border-b border-[#d5d0cc] bg-[#e9e8e6] text-sm text-[#2e3436]">
      <button type="button" className="flex w-[133px] items-center gap-[5px] pl-[5px]"><Windows />Demo/Demo</button>
      <div className="-mb-px flex h-[33px] items-center border-x border-[#d5d0cc] bg-[#f6f5f4] pr-[7px] pl-[6px]">
        <Film />
        <button type="button" className="ml-[5px] whitespace-nowrap">Demo/2023-05-31 12:08:37/lprnet-pt-op13-fp32-N</button>
        <IconButton label="关闭" className="ml-[8px]"><CloseX /></IconButton>
      </div>
      <div className="ml-auto self-start"><MinMax /></div>
    </div>
    <PanelHead icon={<Film />} title="lprnet-pt-op13-fp32-N" className="pr-4 pl-2">
      <div className="ml-auto flex items-center">
        <IconButton label="导出"><Server arrow /></IconButton>
        <span className="mr-[13px] ml-[10px] h-[26px] w-px bg-[#e0deda]" />
        <IconButton label="放大"><Expand /></IconButton>
        <IconButton label="缩小" className="ml-[11px]"><Shrink /></IconButton>
        <IconButton label="适应" className="ml-[11px]"><Fit /></IconButton>
        <span className="mr-[13px] ml-[11px] h-[26px] w-px bg-[#e0deda]" />
        <IconButton label="列表"><ListIcon /></IconButton>
      </div>
    </PanelHead>
    <div className="flex min-h-0 flex-1">
      <Graph />
      <div className="w-[12px] shrink-0 border-l border-[#a5a5a5] bg-white">
        <button type="button" aria-label="显示选项板" className="flex h-[31px] w-full items-center justify-center border-b border-[#a5a5a5] bg-[#f6f5f4]">
          <Svg w={8} h={12}><path d="M6.500 1v10L1 6z" fill="#fff" stroke="#111" /></Svg>
        </button>
      </div>
    </div>
    <div className="h-[28px] shrink-0 border-t border-[#a5a5a5] bg-[#e9e8e6]">
      <button type="button" className="-mt-px flex h-[28px] w-[38px] items-center justify-center border-r border-b-2 border-[#a5a5a5] bg-[#e9e8e6] pt-px text-[#2e3436]">概览</button>
    </div>
    <Tooltip />
  </section>
);

/* ---------- properties ---------- */

const Check = ({ id, checked, children }) => (
  <div className="flex h-7 items-center gap-[5px]">
    <span className="relative flex h-4 w-4 shrink-0">
      <input id={id} type="checkbox" defaultChecked={checked} className="peer h-4 w-4 appearance-none rounded-[3px] border border-[#c0b9b2] bg-white checked:border-[#3584e4]" />
      <svg viewBox="0 0 16 16" className="pointer-events-none absolute inset-0 hidden peer-checked:block" fill="none" aria-hidden="true"><path d="M3.500 8l3 3 6-6.500" stroke="#1a1a1a" strokeWidth="2.800" /></svg>
    </span>
    <label htmlFor={id} className="whitespace-nowrap">{children}</label>
  </div>
);

const PropTab = ({ icon, active, children }) => (
  <button type="button" role="tab" aria-selected={!!active} className={`-mb-px flex h-[31px] items-center gap-[6px] border-b-2 px-1 pt-px ${active ? "border-[#0b78d8] text-[#0b78d8]" : "border-transparent text-[#8d8d8d]"}`}>
    <span className="pb-1">{icon}</span>{children}
  </button>
);

const Properties = () => (
  <section aria-label="属性" className="flex w-[482px] shrink-0 flex-col border-t border-b border-l border-[#cbc6c1] bg-white">
    <div className="flex h-[33px] shrink-0 items-center border-b border-[#cbc6c1] bg-[#e1dedb]">
      <div className="-mb-px flex h-[33px] w-[80px] items-center border-r border-[#cbc6c1] bg-white pl-[5px]">
        <Props />
        <button type="button" className="ml-1 text-[#2e3436]">属性</button>
        <IconButton label="关闭" className="ml-[7px]"><CloseX /></IconButton>
      </div>
      <span className="mr-3 ml-auto h-[27px] w-[7px] self-end bg-white" />
      <MinMax />
    </div>
    <PanelHead icon={<Svg s={15}><rect x="0" y="2" width="12" height="12" fill="#8ad3ec" /></Svg>} title="Calibration HLIR Node «div»" />
    <div role="tablist" className="mr-[5px] ml-[5px] flex h-[31px] items-center justify-center border-b border-[#e0deda] pr-[8px]">
      <PropTab icon={<BasicInfo />}>基本信息</PropTab>
      <PropTab icon={<Calib />} active>校准配置</PropTab>
      <PropTab icon={<ResultWin />}>分析结果</PropTab>
    </div>
    <h3 className="mx-[7px] mt-[2px] flex h-[27px] shrink-0 items-center gap-[6px] bg-[#ebebeb] pl-[5px] font-bold text-[#2e3436]">
      <Svg w={8} h={5}><path d="M0 .5h8L4 4.800z" fill="#2e3436" /></Svg>基本
    </h3>
    <div className="mt-[5px] pl-[19px] text-black">
      <Check id="fp32" checked>设置当前<span className="text-sm">HLIR</span>算子精度为<span className="text-sm">FP32</span></Check>
      <Check id="stat">统计分析当前<span className="text-sm">HLIR</span>算子(包括<span className="text-sm">Nan/Inf,numpy allclose</span>等相关信息)</Check>
    </div>
  </section>
);

/* ---------- results ---------- */

const COLS = [
  ["序号", "w-[45px]"], ["时间", "w-[164px]"], ["批次", "w-[99px]"],
  ["fp16GeRatio", "w-[115px]", 1], ["fp16LeRatio", "w-[114px]", 1], ["fp16ClipRatio", "w-[114px]", 1], ["fp16CheckNan", "w-[163px]"],
  ["fp32GeRatio", "w-[114px]", 1], ["fp32LeRatio", "w-[163px]", 1], ["fp32ClipRatio", "w-[163px]", 1], ["fp32CheckNan", ""],
];

const DateField = ({ id, label, gap }) => (
  <>
    <label htmlFor={id} className={gap}>{label}</label>
    <input id={id} defaultValue="2023/5/31" className="ml-[7px] h-[30px] w-[87px] rounded-[6px] border border-[#cfcac5] bg-[#fcfcfc] text-center text-sm text-[#2e3436]" />
    <IconButton label="选择日期" className="ml-2"><Calendar /></IconButton>
  </>
);

const Results = () => (
  <section aria-label="算子校准结果详情" className="mt-1 flex h-[263px] shrink-0 flex-col border-t border-b border-l border-[#d5d0cc] bg-white">
    <div className="flex h-[33px] shrink-0 items-center border-b border-[#d5d0cc] bg-[#e9e8e6] whitespace-nowrap text-[#2e3436]">
      <button type="button" className="flex w-[73px] items-center gap-1 pl-[6px]"><ConsoleIcon />控制台</button>
      <div className="-mb-px flex h-[33px] w-[171px] items-center border-x border-[#d5d0cc] bg-[#f6f5f4] pl-[5px]">
        <FolderTable />
        <button type="button" className="ml-[3px]">算子校准结果详情</button>
        <IconButton label="关闭" className="ml-[7px]"><CloseX /></IconButton>
      </div>
      <button type="button" className="ml-[4px] flex items-center gap-[3px]"><FolderStar />混精分析结果</button>
      <button type="button" className="ml-[13px] flex items-center gap-[4px]"><Book />书签</button>
      <button type="button" className="ml-[9px] flex items-center gap-[3px]"><OpStat />算子类型统计</button>
      <div className="ml-auto self-start"><MinMax /></div>
    </div>
    <PanelHead icon={<TableIcon />} title="ReduceMean_58@Div-6 «div»" />
    <div role="tablist" className="mr-[5px] ml-[5px] flex h-[31px] shrink-0 items-end border-b border-[#e0deda]">
      <button type="button" role="tab" aria-selected="true" className="-mb-px flex h-[31px] w-[90px] items-center gap-[7px] border-b-2 border-[#0b78d8] pl-[5px] text-[#0b78d8]">
        <Svg w={13} h={13} className="mb-1"><rect x="1" y="1" width="11" height="11" fill="#fffdf8" stroke="#f09609" strokeWidth="1.200" /><path d="M.4 2h12.200" stroke="#f09609" strokeWidth="3" /></Svg>
        分析事件
      </button>
    </div>
    <form className="mr-[5px] flex h-[34px] shrink-0 items-center justify-end text-black">
      <label htmlFor="out">输出名称:</label>
      <span className="relative ml-[5px] flex h-[34px] w-[212px] items-center">
        <select id="out" disabled className="h-[34px] w-full appearance-none rounded-[6px] border border-[#cfcac5] bg-[#f6f5f4] pl-[6px] text-sm text-[#929595]"><option>ReduceMean_58@Div-6</option></select>
        <span className="pointer-events-none absolute right-[8px]"><Caret /></span>
      </span>
      <DateField id="from" label="开始时间:" gap="ml-[5px]" />
      <DateField id="to" label="结束时间:" gap="ml-[15px]" />
      <button type="button" className="ml-[12px] h-[34px] w-[41px] rounded-[6px] border border-[#cfcac5] bg-[#fdfdfd]">查询</button>
    </form>
    <div className="mr-[5px] ml-[5px] h-[83px] shrink-0 overflow-hidden border border-[#d5d0cc] bg-white">
      <table className="w-full table-fixed border-collapse text-left">
        <thead>
          <tr className="h-8 bg-[#fcfcfc] text-[#bfbfbf]">
            {COLS.map(([name, w, right], i) => (
              <th key={name} scope="col" className={`${w} border-r border-[#f3f2f1] pl-[4px] pr-[5px] whitespace-nowrap last:border-r-0 ${i < 3 ? "font-medium" : "text-sm font-bold"} ${right ? "text-right" : ""}`}>{name}</th>
            ))}
          </tr>
        </thead>
        <tbody>
          <tr className="h-6 bg-[#f3f4f9] text-sm font-bold text-black">
            <td className="border-r border-[#eeeff4] pt-px"><span className="flex items-center gap-[9px] pl-[5px]"><Twisty open={false} />1</span></td>
            <td className="border-r border-[#eeeff4] pt-px whitespace-nowrap" colSpan={2}><span className="flex items-center gap-2 pl-[5px]"><span className="h-2 w-2 rounded-full bg-[#6cc5e8]" />2023-05-31 12:08:37</span></td>
            {COLS.slice(3).map(([name]) => <td key={name} className="border-r border-[#eeeff4] last:border-r-0" />)}
          </tr>
        </tbody>
      </table>
    </div>
    <footer className="flex min-h-0 flex-1 items-center pt-[4px] pr-[5px] pl-[610px] text-black">
      <label htmlFor="size" className="whitespace-nowrap">共1条</label>
      <span className="relative ml-[4px] flex items-center">
        <select id="size" className="h-[37px] w-[112px] appearance-none rounded-[6px] border border-[#cfcac5] bg-white pl-[7px] text-[#929595]"><option>5条/页</option></select>
        <span className="pointer-events-none absolute right-[8px]"><Caret /></span>
      </span>
      <a href="#prev" className="ml-[4px] whitespace-nowrap text-[#b0a99c] underline underline-offset-2">↩上一页</a>
      <span className="flex-1 text-center text-sm text-[#e0245e]">1</span>
      <a href="#next" className="whitespace-nowrap text-[#b0a99c] underline underline-offset-2">下一页↪</a>
    </footer>
  </section>
);

/* ---------- window ---------- */

const TitleBar = () => (
  <header className="flex h-[37px] shrink-0 items-center border-t border-b border-t-white border-b-[#d5d0cc]">
    <div className="flex-1" />
    <h1 className="text-sm font-bold text-[#8b8e8f]">TopsModelGraph</h1>
    <div className="flex flex-1 items-center justify-end gap-[20px] pr-[10px]">
      <IconButton label="最小化窗口"><Svg w={14} h={14}><path d="M1.500 4.500L7 10l5.500-5.500" stroke="#8b8e8f" strokeWidth="1.200" /></Svg></IconButton>
      <IconButton label="最大化窗口"><Svg w={14} h={14}><path d="M7 2l5 5-5 5-5-5z" stroke="#8b8e8f" strokeWidth="1.200" /></Svg></IconButton>
      <IconButton label="关闭窗口"><Svg w={14} h={14}><circle cx="7" cy="7" r="6" fill="#8b8e8f" /><path d="M4.600 4.600l4.800 4.800M9.400 4.600l-4.800 4.800" stroke="#fff" strokeWidth="1.400" /></Svg></IconButton>
    </div>
  </header>
);

const Toolbar = () => (
  <div role="toolbar" className="flex h-[37px] shrink-0 items-center">
    <Grip />
    <IconButton label="新建" className="ml-[12px]"><NewWiz /></IconButton>
    <IconButton label="新建选项" className="ml-[8px]"><Caret /></IconButton>
    <IconButton label="打开" className="ml-[10px]"><OpenFolder /></IconButton>
    <IconButton label="保存" className="ml-[11px]"><Save /></IconButton>
    <span className="ml-[10px]"><Grip /></span>
    <IconButton label="服务" className="ml-[11px]"><Server /></IconButton>
    <IconButton label="服务选项" className="ml-[8px]"><Caret /></IconButton>
    <IconButton label="调试" className="ml-[9px]"><Bug /></IconButton>
    <IconButton label="调试选项" className="ml-[9px]"><Caret /></IconButton>
    <span className="ml-[9px]"><Grip /></span>
    <IconButton label="商店" className="ml-[10px]"><Shop /></IconButton>
    <span className="ml-[9px]"><Grip /></span>
    <IconButton label="放大视图" className="ml-[10px]"><Mag plus /></IconButton>
    <IconButton label="缩小视图" className="ml-[12px]"><Mag /></IconButton>
    <div className="ml-[7px] flex h-[33px] w-[197px] rounded-[5px] border border-[#d5d0cc] bg-[#faf9f8]">
      <input aria-label="缩放比例" disabled className="w-[170px] border-r border-[#d5d0cc] bg-transparent" />
      <IconButton label="缩放选项" className="flex-1"><Caret c="#c9c6c3" /></IconButton>
    </div>
    <IconButton label="搜索" className="mr-[19px] ml-auto"><SearchG c="#6f6f6f" s={15} sw={1.800} /></IconButton>
  </div>
);

const StatusBar = () => (
  <footer className="flex h-[30px] shrink-0 items-center justify-end pr-[316px]">
    <Grip />
    <div className="ml-px flex h-full w-[154px] items-center border-t border-r border-[#9a9a9a] bg-linear-to-r from-[#a0a0a0] from-56% to-[#f6f5f4] to-56% pl-[16px] whitespace-nowrap text-[#2e3436]"><span className="text-sm">156</span>兆（共&nbsp;<span className="text-sm">280</span>兆）</div>
    <IconButton label="回收内存" className="h-full w-[17px] border-r border-white"><Trash /></IconButton>
    <span className="ml-[2px]"><Grip /></span>
  </footer>
);

export default function App() {
  return (
    <div className="flex h-screen flex-col overflow-hidden bg-[#f6f5f4] font-['Noto_Sans','Noto_Sans_CJK_SC',sans-serif] text-[15px] leading-5">
      <TitleBar />
      <nav className="flex h-[31px] shrink-0 items-center gap-4 border-b border-[#dcdad8] px-2 pt-[2px] text-[#929595]">
        {["文件", "编辑", "视图", "帮助"].map((m) => <button key={m} type="button">{m}</button>)}
      </nav>
      <Toolbar />
      <main className="flex min-h-0 flex-1">
        <div className="flex w-[402px] shrink-0 flex-col">
          <ProjectPanel />
          <ModelPanel />
        </div>
        <div className="ml-1 flex min-w-0 flex-1 flex-col">
          <div className="flex min-h-0 flex-1 gap-1">
            <Editor />
            <Properties />
          </div>
          <Results />
        </div>
      </main>
      <StatusBar />
    </div>
  );
}
